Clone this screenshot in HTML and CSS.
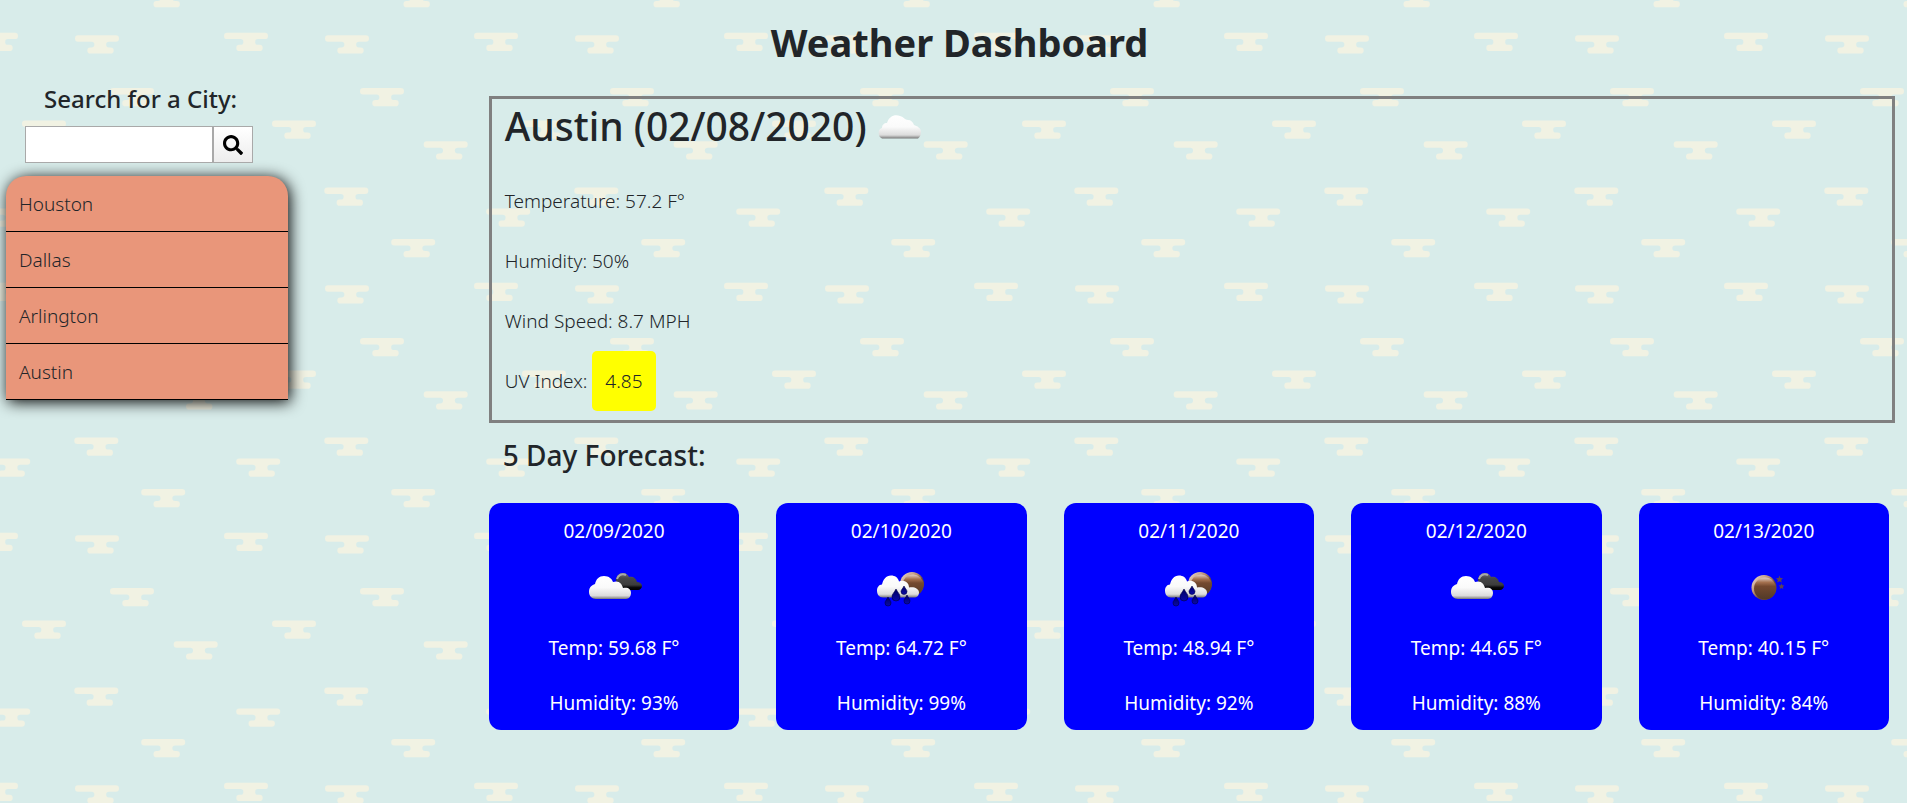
FILE: index.html
```html
<!DOCTYPE html>
<html lang="en">
<head>
<meta charset="utf-8">
<meta name="viewport" content="width=device-width, initial-scale=1">
<title>Weather Dashboard</title>
<link rel="stylesheet" href="styles.css">
</head>
<body>
<svg class="defs" aria-hidden="true">
  <defs>
    <linearGradient id="white" x1="0" y1="0" x2="0" y2="1">
      <stop offset="0" stop-color="#fff"/><stop offset=".5" stop-color="#fafafa"/><stop offset=".85" stop-color="#dcdcdc"/><stop offset=".93" stop-color="#aaa"/><stop offset="1" stop-color="#777"/>
    </linearGradient>
    <linearGradient id="dark" x1="0" y1="0" x2="0" y2="1">
      <stop offset="0" stop-color="#777"/><stop offset=".3" stop-color="#484848"/><stop offset=".7" stop-color="#3c3c3c"/><stop offset=".85" stop-color="#0a0a0a"/><stop offset="1" stop-color="#000"/>
    </linearGradient>
    <linearGradient id="moon" x1="0" y1="0" x2="0" y2="1">
      <stop offset="0" stop-color="#e0cfc6"/><stop offset=".22" stop-color="#a5714f"/><stop offset=".4" stop-color="#74492f"/><stop offset="1" stop-color="#523a28"/>
    </linearGradient>
    <linearGradient id="rim" x1="0" y1="0" x2="1" y2="1">
      <stop offset="0" stop-color="#f3e6df"/><stop offset=".4" stop-color="#b98d72"/><stop offset=".6" stop-color="#6b4a35"/>
    </linearGradient>
    <linearGradient id="drop" x1="0" y1="0" x2="0" y2="1">
      <stop offset="0" stop-color="#000060"/><stop offset="1" stop-color="#0a0aa8"/>
    </linearGradient>
  </defs>
  <symbol id="cloudy" viewBox="0 0 50 50">
    <path fill="url(#white)" d="M8 37.500a4 4 0 0 1-3-3.500c-1-3 0-6 3-7 0-3 2-5 5-5 2-7 8-9 13-7 4 1 5 4 8 4 3 0 5 2 6 5 3 1 7 3 7 7 0 3-1 5-3 6.500z"/>
  </symbol>
  <symbol id="broken" viewBox="0 0 56 36">
    <path fill="url(#dark)" d="M29 11c0-5 3-8 7-8 3 0 5 2 6 4 4-1 7 1 8 5 3 0 5 2 5 4s-2 4-4 4H36z"/>
    <path fill="none" stroke="#aaa" stroke-width="2" d="M30 9c1-4 5-6 9-4"/>
    <path fill="url(#white)" d="M9 29c-4 0-7-3-7-7 0-5 3-7 6-8 1-5 4-8 9-8s8 3 9 6c6-2 9 2 10 6 5-1 8 1 8 5 0 3-2 6-5 6z"/>
  </symbol>
  <symbol id="rain" viewBox="0 0 56 40">
    <circle cx="38" cy="14" r="12" fill="url(#rim)"/>
    <circle cx="39" cy="15" r="10.500" fill="url(#moon)"/>
    <path fill="url(#white)" d="M9 27.500c-4 0-6-3-6-7 0-3 2-6 5-6 1-5 4-9 9-9 4 0 7 2 8 6 4-2 10 0 10 6 5-1 10 1 10 5 0 3-2 5-5 5z"/>
    <g fill="url(#drop)" stroke="#000048" stroke-width=".6">
      <path d="M22 19c2 4 4 5 4 8a4 4 0 0 1-8 0c0-3 2-4 4-8z"/>
      <path d="M30 16c1.500 3 3 4 3 5.500a3 3 0 0 1-6 0c0-1.500 1.500-2.500 3-5.500z"/>
      <path d="M14 27c1.500 3 3 4 3 6a3 3 0 0 1-6 0c0-2 1.500-3 3-6z"/>
      <path d="M33 25c1.500 3 3 4 3 6a3 3 0 0 1-6 0c0-2 1.500-3 3-6z"/>
    </g>
  </symbol>
  <symbol id="clear" viewBox="0 0 56 36">
    <circle cx="27" cy="17.500" r="12.500" fill="url(#rim)"/>
    <circle cx="28" cy="18.500" r="11" fill="url(#moon)"/>
    <path fill="#5d4455" d="M42.500 5.500l1 2.500 2.500.2-1.800 1.800.6 2.500-2.300-1.200-2.300 1.200.6-2.500L39 8.200l2.500-.2zM44.500 13.500l.8 1.800 2 .2-1.400 1.400.4 2-1.800-1-1.800 1 .4-2-1.400-1.400 2-.2z"/>
  </symbol>
</svg>

<header class="title"><h1>Weather Dashboard</h1></header>

<div class="layout">
  <aside class="sidebar">
    <form class="search" onsubmit="return false">
      <label class="search-label" for="city">Search for a City:</label>
      <div class="search-row">
        <input class="search-input" id="city" type="text">
        <button class="search-button" type="submit" aria-label="Search">
          <svg class="search-icon" viewBox="0 0 512 512" aria-hidden="true"><path d="M505 442.700L405.300 343c-4.500-4.500-10.600-7-17-7H372c27.600-35.300 44-79.700 44-128C416 93.100 322.900 0 208 0S0 93.100 0 208s93.100 208 208 208c48.300 0 92.700-16.400 128-44v16.300c0 6.400 2.500 12.500 7 17l99.700 99.700c9.400 9.400 24.600 9.400 33.900 0l28.300-28.300c9.400-9.400 9.400-24.600.1-34zM208 336c-70.700 0-128-57.200-128-128 0-70.700 57.200-128 128-128 70.700 0 128 57.200 128 128 0 70.700-57.200 128-128 128z"/></svg>
        </button>
      </div>
    </form>
    <ul class="cities">
      <li class="city">Houston</li>
      <li class="city">Dallas</li>
      <li class="city">Arlington</li>
      <li class="city">Austin</li>
    </ul>
  </aside>

  <main class="main">
    <section class="current">
      <h2 class="current-title">Austin (02/08/2020) <svg class="current-icon" role="img" aria-label="Cloudy"><use href="#cloudy"/></svg></h2>
      <p class="stat">Temperature: 57.2 F°</p>
      <p class="stat">Humidity: 50%</p>
      <p class="stat">Wind Speed: 8.7 MPH</p>
      <p class="stat">UV Index: <span class="uv">4.85</span></p>
    </section>

    <h3 class="forecast-title">5 Day Forecast:</h3>
    <section class="forecast">
      <article class="day"><p>02/09/2020</p><svg class="day-icon" viewBox="-1 0 56 36"><use href="#broken" width="56" height="36"/></svg><p>Temp: 59.68 F°</p><p>Humidity: 93%</p></article>
      <article class="day"><p>02/10/2020</p><svg class="day-icon" viewBox="-1 0 56 36"><use href="#rain" width="56" height="40"/></svg><p>Temp: 64.72 F°</p><p>Humidity: 99%</p></article>
      <article class="day"><p>02/11/2020</p><svg class="day-icon" viewBox="-1 0 56 36"><use href="#rain" width="56" height="40"/></svg><p>Temp: 48.94 F°</p><p>Humidity: 92%</p></article>
      <article class="day"><p>02/12/2020</p><svg class="day-icon" viewBox="-1 0 56 36"><use href="#broken" width="56" height="36"/></svg><p>Temp: 44.65 F°</p><p>Humidity: 88%</p></article>
      <article class="day"><p>02/13/2020</p><svg class="day-icon" viewBox="-1 0 56 36"><use href="#clear" width="56" height="36"/></svg><p>Temp: 40.15 F°</p><p>Humidity: 84%</p></article>
    </section>
  </main>
</div>
</body>
</html>
```
FILE: styles.css
```css
* { box-sizing: border-box; }

body {
  margin: 0;
  color: #212529;
  font-family: "Segoe UI", "Noto Sans", "Open Sans", sans-serif;
  font-size: 19px;
  font-weight: 300;
  background-color: #d8ecea;
  background-image: url("data:image/svg+xml,%3Csvg xmlns='http://www.w3.org/2000/svg' xmlns:xlink='http://www.w3.org/1999/xlink' width='250' height='250'%3E%3Cdefs%3E%3Cpath id='c' fill='%23f1f2e3' d='M3.200 0H40.800a3.200 3.200 0 0 1 0 6.400H34a2.850 2.850 0 0 0 0 5.700H35.600a3.100 3.100 0 0 1 0 6.200H15.400a3.100 3.100 0 0 1 0-6.200H16.500a2.850 2.850 0 0 0 0-5.700H3.200a3.200 3.200 0 0 1 0-6.400z'/%3E%3C/defs%3E%3Cuse xlink:href='%23c' x='75' y='35.300'/%3E%3Cuse xlink:href='%23c' x='224' y='32.700'/%3E%3Cuse xlink:href='%23c' x='-26' y='32.700'/%3E%3Cuse xlink:href='%23c' x='110' y='88'/%3E%3Cuse xlink:href='%23c' x='22' y='120.500'/%3E%3Cuse xlink:href='%23c' x='173.700' y='141.300'/%3E%3Cuse xlink:href='%23c' x='74.300' y='187.500'/%3E%3Cuse xlink:href='%23c' x='236.200' y='208.400'/%3E%3Cuse xlink:href='%23c' x='-13.800' y='208.400'/%3E%3Cuse xlink:href='%23c' x='141.200' y='239'/%3E%3Cuse xlink:href='%23c' x='141.200' y='-11'/%3E%3C/svg%3E");
}

h1, h2, h3, p, ul { margin: 0; padding: 0; }

.defs { display: block; width: 0; height: 0; }

.title { padding: 18px 0 20px; }
.title h1 {
  text-align: center;
  padding-left: 12px;
  font-size: 38px;
  line-height: 48px;
  font-weight: 700;
}

.layout { display: grid; grid-template-columns: 1fr 3fr; }

.sidebar { padding: 0 6px; }
.search { padding: 0 19px; }
.search-label {
  display: block;
  padding-left: 19px;
  font-size: 24px;
  line-height: 26px;
  font-weight: 500;
}
.search-row { display: flex; margin-top: 14px; }
.search-input {
  width: 188px;
  height: 37px;
  padding: 4px 8px;
  border: 1px solid #a9a9a9;
  font: inherit;
  background: #fff;
}
.search-button {
  display: grid;
  place-items: center;
  width: 40px;
  height: 37px;
  padding: 0;
  border: 1px solid #a9a9a9;
  background: linear-gradient(#fff, #ededed);
}
.search-icon { width: 20px; height: 20px; }

.cities {
  width: 282px;
  margin-top: 13px;
  list-style: none;
  border-radius: 20px 20px 0 0;
  overflow: hidden;
  background: #e9967a;
  box-shadow: 2px 2px 15px #000;
}
.city {
  padding: 2px 13px 0;
  line-height: 53px;
  border-bottom: 1px solid #000;
}

.main { padding: 10px 12px 0; }
.current { padding: 0 13px 9px; border: 3px solid #808080; }
.current-title {
  display: flex;
  align-items: center;
  gap: 7px;
  height: 72px;
  padding-bottom: 19px;
  font-size: 39px;
  line-height: 53px;
  font-weight: 500;
}
.current-icon { width: 50px; height: 50px; }
.stat { line-height: 60px; }
.uv {
  display: inline-block;
  padding: 0 13px;
  border-radius: 5px;
  background: #ff0;
}

.forecast-title {
  padding: 12px 14px 28px;
  font-size: 28px;
  line-height: 40px;
  font-weight: 500;
}
.forecast {
  display: grid;
  grid-template-columns: repeat(5, 1fr);
  gap: 37px;
  padding-right: 6px;
}
.day {
  display: flex;
  flex-direction: column;
  align-items: center;
  padding: 0 12px;
  border-radius: 12px;
  background: #00f;
  color: #fff;
  font-weight: 400;
}
.day p { padding-top: 2px; line-height: 53px; }
.day-icon { width: 56px; height: 36px; margin: 12px 0 14px; overflow: visible; }
```
